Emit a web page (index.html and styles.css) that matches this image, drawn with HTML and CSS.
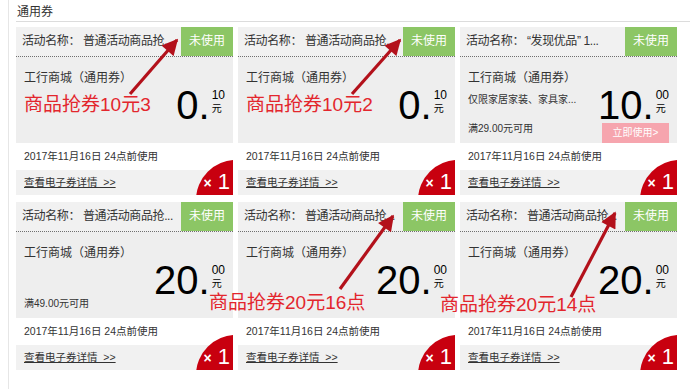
FILE: index.html
```html
<!DOCTYPE html>
<html lang="zh-CN">
<head>
<meta charset="utf-8">
<title>通用券</title>
<link rel="stylesheet" href="styles.css">
</head>
<body>
<div class="page">
  <div class="title">通用券</div>
  <div class="grid">
    <div class="card">
      <div class="head"><div class="name">活动名称： 普通活动商品抢...</div><div class="status">未使用</div></div>
      <div class="body">
        <div class="shop">工行商城（通用券）</div>
        <div class="price"><span class="int">0.</span><span class="dec"><span class="cents">10</span><span class="yuan">元</span></span></div>
      </div>
      <div class="date">2017年11月16日 24点前使用</div>
      <div class="link"><span>查看电子券详情 &nbsp;&gt;&gt;</span></div>
      <div class="corner"></div>
      <div class="qty"><span class="x">×</span><span class="n">1</span></div>
    </div>
    <div class="card">
      <div class="head"><div class="name">活动名称： 普通活动商品抢...</div><div class="status">未使用</div></div>
      <div class="body">
        <div class="shop">工行商城（通用券）</div>
        <div class="price"><span class="int">0.</span><span class="dec"><span class="cents">10</span><span class="yuan">元</span></span></div>
      </div>
      <div class="date">2017年11月16日 24点前使用</div>
      <div class="link"><span>查看电子券详情 &nbsp;&gt;&gt;</span></div>
      <div class="corner"></div>
      <div class="qty"><span class="x">×</span><span class="n">1</span></div>
    </div>
    <div class="card">
      <div class="head"><div class="name">活动名称： “发现优品” 1...</div><div class="status">未使用</div></div>
      <div class="body">
        <div class="shop">工行商城（通用券）</div>
        <div class="desc">仅限家居家装、家具家...</div>
        <div class="price"><span class="int">10.</span><span class="dec"><span class="cents">00</span><span class="yuan">元</span></span></div>
        <div class="cond">满29.00元可用</div>
        <div class="btn">立即使用&gt;</div>
      </div>
      <div class="date">2017年11月16日 24点前使用</div>
      <div class="link"><span>查看电子券详情 &nbsp;&gt;&gt;</span></div>
      <div class="corner"></div>
      <div class="qty"><span class="x">×</span><span class="n">1</span></div>
    </div>
    <div class="card">
      <div class="head"><div class="name">活动名称： 普通活动商品抢...</div><div class="status">未使用</div></div>
      <div class="body">
        <div class="shop">工行商城（通用券）</div>
        <div class="price"><span class="int">20.</span><span class="dec"><span class="cents">00</span><span class="yuan">元</span></span></div>
        <div class="cond">满49.00元可用</div>
      </div>
      <div class="date">2017年11月16日 24点前使用</div>
      <div class="link"><span>查看电子券详情 &nbsp;&gt;&gt;</span></div>
      <div class="corner"></div>
      <div class="qty"><span class="x">×</span><span class="n">1</span></div>
    </div>
    <div class="card">
      <div class="head"><div class="name">活动名称： 普通活动商品抢...</div><div class="status">未使用</div></div>
      <div class="body">
        <div class="shop">工行商城（通用券）</div>
        <div class="price"><span class="int">20.</span><span class="dec"><span class="cents">00</span><span class="yuan">元</span></span></div>
      </div>
      <div class="date">2017年11月16日 24点前使用</div>
      <div class="link"><span>查看电子券详情 &nbsp;&gt;&gt;</span></div>
      <div class="corner"></div>
      <div class="qty"><span class="x">×</span><span class="n">1</span></div>
    </div>
    <div class="card">
      <div class="head"><div class="name">活动名称： 普通活动商品抢...</div><div class="status">未使用</div></div>
      <div class="body">
        <div class="shop">工行商城（通用券）</div>
        <div class="price"><span class="int">20.</span><span class="dec"><span class="cents">00</span><span class="yuan">元</span></span></div>
      </div>
      <div class="date">2017年11月16日 24点前使用</div>
      <div class="link"><span>查看电子券详情 &nbsp;&gt;&gt;</span></div>
      <div class="corner"></div>
      <div class="qty"><span class="x">×</span><span class="n">1</span></div>
    </div>
  </div>
</div>

<div class="ann ann1">商品抢券10元3</div>
<div class="ann ann2">商品抢券10元2</div>
<div class="ann ann3">商品抢券20元16点</div>
<div class="ann ann4">商品抢券20元14点</div>

<svg class="arrows" width="700" height="389" viewBox="0 0 700 389">
  <defs>
    <marker id="head" viewBox="0 0 10 10" refX="9" refY="5" markerWidth="5.5" markerHeight="5" orient="auto" markerUnits="strokeWidth">
      <path d="M0,0 L10,5 L0,10 z" fill="#b3111b"/>
    </marker>
  </defs>
  <line x1="130" y1="94" x2="177" y2="40" stroke="#b3111b" stroke-width="3.2" marker-end="url(#head)"/>
  <line x1="352" y1="94" x2="400" y2="40" stroke="#b3111b" stroke-width="3.2" marker-end="url(#head)"/>
  <line x1="340" y1="289" x2="393" y2="216" stroke="#b3111b" stroke-width="3.2" marker-end="url(#head)"/>
  <line x1="571" y1="297" x2="615" y2="213" stroke="#b3111b" stroke-width="3.2" marker-end="url(#head)"/>
</svg>
</body>
</html>
```

FILE: styles.css
```css
body {
  margin: 0;
  width: 700px;
  height: 389px;
  overflow: hidden;
  position: relative;
  background: #fff;
  color: #333;
  font-family: "Liberation Sans", "Noto Sans CJK SC", sans-serif;
}

.page {
  margin-left: 8px;
  width: 682px;
  height: 389px;
  box-sizing: border-box;
  border-left: 1px solid #e6e6e6;
  padding-left: 7px;
}

.title {
  font-size: 12px;
  line-height: 17px;
  padding: 4px 0 0 1px;
  border-bottom: 1px solid #dcdcdc;
}

.grid {
  display: grid;
  grid-template-columns: repeat(3, 217px);
  grid-auto-rows: 168px;
  column-gap: 5px;
  row-gap: 7px;
  margin-top: 5px;
}

.card {
  position: relative;
  overflow: hidden;
  display: flex;
  flex-direction: column;
}

.head {
  height: 30px;
  box-sizing: border-box;
  display: flex;
  background: #f1f1f1;
  border-bottom: 1px dotted #6f6f6f;
}

.name {
  flex: 1;
  font-size: 12px;
  line-height: 29px;
  padding-left: 6px;
  letter-spacing: -0.4px;
  white-space: nowrap;
  overflow: hidden;
}

.status {
  width: 52px;
  background: #8cc665;
  color: #fff;
  font-size: 12px;
  line-height: 29px;
  text-align: center;
}

.body {
  height: 86px;
  box-sizing: border-box;
  background: #eeeeee;
  padding: 11px 8px 0 8px;
  display: grid;
  grid-template-columns: 1fr auto;
  grid-template-rows: 20px 34px auto;
}

.shop {
  grid-column: 1 / 3;
  grid-row: 1;
  font-size: 12px;
  line-height: 20px;
}

.desc {
  grid-column: 1;
  grid-row: 2;
  font-size: 10px;
  line-height: 16px;
  margin-top: 4px;
  white-space: nowrap;
}

.price {
  grid-column: 2;
  grid-row: 2;
  display: flex;
  color: #000;
}

.int {
  font-size: 40px;
  line-height: 34px;
}

.dec {
  display: flex;
  flex-direction: column;
  margin-left: 2px;
  padding-top: 1px;
}

.cents {
  font-size: 12px;
  line-height: 13px;
}

.yuan {
  font-size: 10px;
  line-height: 13px;
}

.cond {
  grid-column: 1;
  grid-row: 3;
  font-size: 10px;
  line-height: 14px;
}

.btn {
  grid-column: 2;
  grid-row: 3;
  justify-self: end;
  margin-top: 1px;
  width: 67px;
  height: 20px;
  background: #f6a5ae;
  color: #fff;
  font-size: 10px;
  line-height: 20px;
  text-align: center;
}

.date {
  height: 27px;
  background: #fff;
  font-size: 10.5px;
  line-height: 27px;
  padding-left: 8px;
}

.link {
  height: 25px;
  background: #f1f1f1;
  font-size: 10.5px;
  line-height: 25px;
  padding-left: 8px;
}

.link span {
  text-decoration: underline;
}

.corner {
  position: absolute;
  right: -43px;
  bottom: -45px;
  width: 80px;
  height: 80px;
  border-radius: 50%;
  background: #c8000f;
}

.qty {
  position: absolute;
  right: 3px;
  bottom: 0;
  display: flex;
  align-items: flex-end;
  color: #fff;
}

.qty .x {
  font-size: 14px;
  line-height: 14px;
  font-weight: bold;
  margin-right: 6px;
  margin-bottom: 5px;
}

.qty .n {
  font-size: 22px;
  line-height: 26px;
}

.ann {
  position: absolute;
  font-size: 19px;
  line-height: 20px;
  color: #e3262d;
  white-space: nowrap;
}

.ann1 { left: 24px; top: 95px; }
.ann2 { left: 246px; top: 95px; }
.ann3 { left: 209px; top: 293px; }
.ann4 { left: 440px; top: 295px; }

.arrows {
  position: absolute;
  left: 0;
  top: 0;
}
```
